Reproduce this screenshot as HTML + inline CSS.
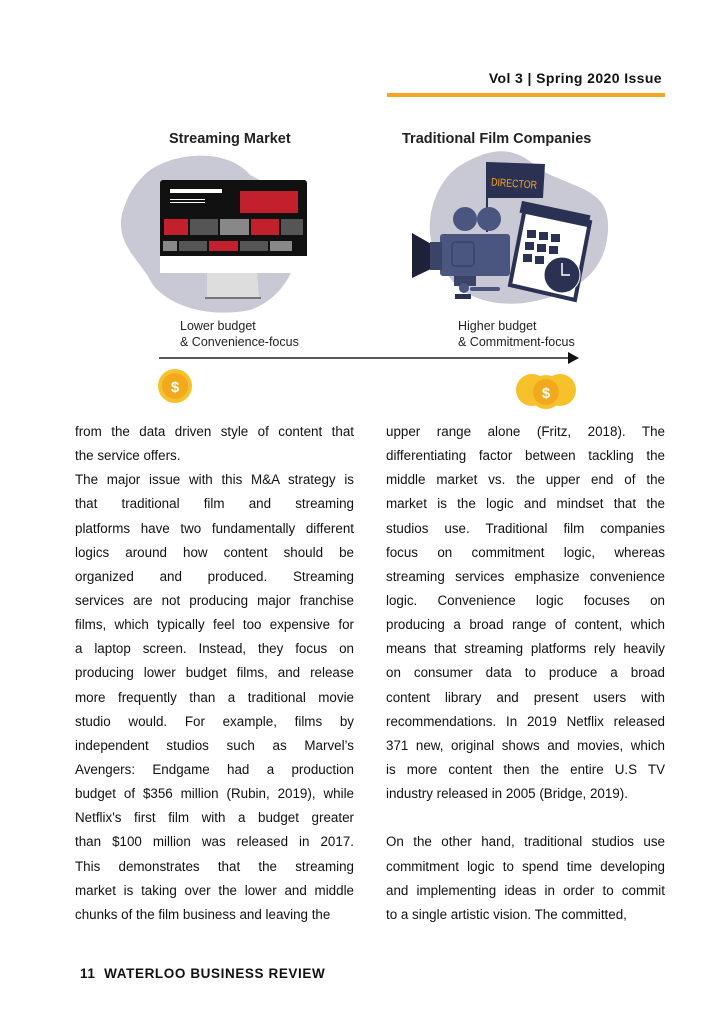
<!DOCTYPE html>
<html><head><meta charset="utf-8"><style>
body{margin:0;background:#fff;width:724px;height:1024px;position:relative;overflow:hidden;font-family:"Liberation Sans",sans-serif;color:#111}
.hdr{position:absolute;right:62px;top:70px;font-weight:bold;font-size:14px;letter-spacing:0.4px}
.bar{position:absolute;left:387px;top:93px;width:278px;height:4px;background:#f5a623}
.col{position:absolute;top:420px;width:279px;font-size:13.4px;}
.col div{height:24.15px;line-height:24px;text-align:justify;text-align-last:justify;white-space:nowrap;overflow:visible}
.col div.l{text-align-last:left}
.ft{position:absolute;left:80px;top:966px;font-size:13.5px;font-weight:bold;letter-spacing:0.6px}
</style></head><body>
<div class="hdr">Vol 3 | Spring 2020 Issue</div>
<div class="bar"></div>
<svg style="position:absolute;left:0;top:0" width="724" height="420">
<text x="169" y="143" font-family="Liberation Sans" font-weight="bold" font-size="14.5" fill="#222">Streaming Market</text>
<text x="402" y="143" font-family="Liberation Sans" font-weight="bold" font-size="14.5" fill="#222">Traditional Film Companies</text>
<path d="M150 170 C180 150 230 150 250 175 C270 185 300 200 300 230 C300 270 280 300 250 310 C200 320 160 300 150 280 C140 260 110 240 125 205 C130 190 140 178 150 170Z" fill="#c9c9d6"/>
<path d="M470 160 C500 145 520 150 540 170 C580 190 610 190 608 230 C606 270 580 290 540 300 C500 310 460 300 445 270 C420 240 430 200 445 180 C452 170 460 165 470 160Z" fill="#c9c9d6"/>
<rect x="160" y="180" width="147" height="92" rx="3" fill="#111"/>
<rect x="160" y="256" width="147" height="17" fill="#fff"/>
<path d="M207 273 L257 273 L259 297 L207 297Z" fill="#ddd"/><rect x="205" y="297" width="56" height="2" fill="#777"/>
<rect x="170" y="189" width="52" height="4" fill="#fff"/><rect x="170" y="199" width="35" height="1" fill="#fff"/><rect x="170" y="202" width="35" height="1" fill="#fff"/>
<rect x="240" y="191" width="58" height="22" fill="#c1202c"/>
<rect x="164" y="219" width="24" height="16" fill="#c1202c"/><rect x="190" y="219" width="28" height="16" fill="#555"/><rect x="220" y="219" width="29" height="16" fill="#888"/><rect x="251" y="219" width="28" height="16" fill="#c1202c"/><rect x="281" y="219" width="22" height="16" fill="#555"/>
<rect x="163" y="241" width="14" height="10" fill="#888"/><rect x="179" y="241" width="28" height="10" fill="#555"/><rect x="209" y="241" width="29" height="10" fill="#c1202c"/><rect x="240" y="241" width="28" height="10" fill="#555"/><rect x="270" y="241" width="22" height="10" fill="#888"/>
<path d="M488 162 L545 164 L543 198 L488 198Z" fill="#2b3152"/><rect x="486" y="162" width="2" height="70" fill="#2b3152"/>
<text x="491" y="187" font-family="Liberation Sans" font-size="11" fill="#f5a623" textLength="46" lengthAdjust="spacingAndGlyphs" transform="rotate(4 512 184)">DIRECTOR</text>
<path d="M525 208 L590 222 L575 300 L510 285Z" fill="#fff" stroke="#2b3152" stroke-width="4"/>
<rect x="520" y="208" width="70" height="12" fill="#2b3152" transform="rotate(12 555 214)"/>
<g fill="#2b3152"><rect x="527" y="230" width="9" height="8"/><rect x="539" y="232" width="9" height="8"/><rect x="551" y="234" width="9" height="8"/><rect x="525" y="242" width="9" height="8"/><rect x="537" y="244" width="9" height="8"/><rect x="549" y="246" width="9" height="8"/><rect x="523" y="254" width="9" height="8"/><rect x="535" y="256" width="9" height="8"/></g>
<circle cx="562" cy="275" r="18" fill="#2b3152" stroke="#fff" stroke-width="1"/><path d="M562 263 V275 H570" stroke="#fff" stroke-width="1.5" fill="none"/>
<circle cx="465" cy="219" r="12" fill="#4a5580"/><circle cx="489" cy="219" r="12" fill="#4a5580"/>
<rect x="440" y="234" width="70" height="42" rx="3" fill="#4a5580"/><rect x="452" y="242" width="22" height="24" rx="3" fill="none" stroke="#3a4468" stroke-width="1.5"/>
<path d="M412 233 L433 245 L433 268 L412 278Z" fill="#1e2238"/><rect x="430" y="242" width="12" height="28" fill="#3a4468"/>
<rect x="454" y="276" width="22" height="10" fill="#3a4468"/><circle cx="464" cy="288" r="5" fill="#4a5580"/><rect x="470" y="287" width="30" height="4" rx="2" fill="#4a5580"/><rect x="455" y="294" width="16" height="5" fill="#2b3152"/>
<text x="180" y="330" font-family="Liberation Sans" font-size="12.5" fill="#222">Lower budget</text>
<text x="180" y="346" font-family="Liberation Sans" font-size="12.5" fill="#222">&amp; Convenience-focus</text>
<text x="458" y="330" font-family="Liberation Sans" font-size="12.5" fill="#222">Higher budget</text>
<text x="458" y="346" font-family="Liberation Sans" font-size="12.5" fill="#222">&amp; Commitment-focus</text>
<line x1="159" y1="358" x2="570" y2="358" stroke="#222" stroke-width="1.5"/><path d="M568 352 L579 358 L568 364Z" fill="#111"/>
<g font-family="Liberation Sans" font-weight="bold" font-size="15" fill="#fff" text-anchor="middle">
<circle cx="175" cy="386" r="17" fill="#f6c12a"/><circle cx="175" cy="386" r="13" fill="#f2a91e"/><text x="175" y="392">$</text>
<circle cx="532" cy="390" r="16" fill="#f6c12a"/><circle cx="560" cy="390" r="16" fill="#f6c12a"/>
<circle cx="546" cy="392" r="17" fill="#f6c12a"/><circle cx="546" cy="392" r="13" fill="#f2a91e"/><text x="546" y="398">$</text></g>
</svg>
<div class="col" style="left:75px">
<div>from the data driven style of content that</div>
<div class="l">the service offers.</div>
<div>The major issue with this M&amp;A strategy is</div>
<div>that traditional film and streaming</div>
<div>platforms have two fundamentally different</div>
<div>logics around how content should be</div>
<div>organized and produced. Streaming</div>
<div>services are not producing major franchise</div>
<div>films, which typically feel too expensive for</div>
<div>a laptop screen. Instead, they focus on</div>
<div>producing lower budget films, and release</div>
<div>more frequently than a traditional movie</div>
<div>studio would. For example, films by</div>
<div>independent studios such as Marvel’s</div>
<div>Avengers: Endgame had a production</div>
<div>budget of $356 million (Rubin, 2019), while</div>
<div>Netflix's first film with a budget greater</div>
<div>than $100 million was released in 2017.</div>
<div>This demonstrates that the streaming</div>
<div>market is taking over the lower and middle</div>
<div class="l">chunks of the film business and leaving the</div>
</div>
<div class="col" style="left:386px">
<div>upper range alone (Fritz, 2018). The</div>
<div>differentiating factor between tackling the</div>
<div>middle market vs. the upper end of the</div>
<div>market is the logic and mindset that the</div>
<div>studios use. Traditional film companies</div>
<div>focus on commitment logic, whereas</div>
<div>streaming services emphasize convenience</div>
<div>logic. Convenience logic focuses on</div>
<div>producing a broad range of content, which</div>
<div>means that streaming platforms rely heavily</div>
<div>on consumer data to produce a broad</div>
<div>content library and present users with</div>
<div>recommendations. In 2019 Netflix released</div>
<div>371 new, original shows and movies, which</div>
<div>is more content then the entire U.S TV</div>
<div class="l">industry released in 2005 (Bridge, 2019).</div>
<div class="l">&nbsp;</div>
<div>On the other hand, traditional studios use</div>
<div>commitment logic to spend time developing</div>
<div>and implementing ideas in order to commit</div>
<div class="l">to a single artistic vision. The committed,</div>
</div>
<div class="ft">11 &nbsp;WATERLOO BUSINESS REVIEW</div>
</body></html>
